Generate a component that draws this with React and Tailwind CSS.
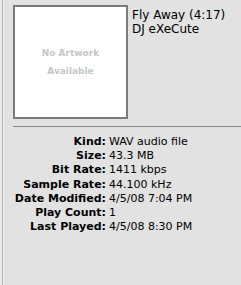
const info = [
  ["Kind:", "WAV audio file"],
  ["Size:", "43.3 MB"],
  ["Bit Rate:", "1411 kbps"],
  ["Sample Rate:", "44.100 kHz"],
  ["Date Modified:", "4/5/08 7:04 PM"],
  ["Play Count:", "1"],
  ["Last Played:", "4/5/08 8:30 PM"],
];

export default function App() {
  return (
    <div
      className="flex w-[241px] h-[285px] bg-[#e2e2e2] text-black overflow-hidden"
      style={{ fontFamily: '"DejaVu Sans", "Liberation Sans", sans-serif' }}
    >
      {/* window edge */}
      <div className="w-[2px] h-full bg-[#e9e9e9]" />
      <div className="w-px h-full bg-[#b5b5b5]" />
      <div className="w-px h-full bg-[#f2f2f2]" />

      <div className="flex-1 flex flex-col">
        {/* Header: artwork + title */}
        <div className="flex pl-[9px] pt-[5px]">
          <div className="w-[115px] h-[114px] border-2 border-[#7a7a7a] bg-white flex flex-col items-center justify-center text-[9px] font-bold text-[#c6c6c6] leading-[18px]">
            <span>No Artwork</span>
            <span>Available</span>
          </div>
          <div className="pl-[4px] pt-[3px] text-[12px] leading-[14px]">
            <p>Fly Away (4:17)</p>
            <p>DJ eXeCute</p>
          </div>
        </div>

        {/* divider */}
        <div className="ml-[9px] mt-[7px] h-px bg-[#8a8a8a]" />

        {/* Info */}
        <div className="grid grid-cols-[102px_1fr] gap-x-[3px] pt-[8px] text-[11px] leading-[14.2px]">
          {info.map(([label, value]) => (
            <div key={label} className="contents">
              <span className="font-bold text-right whitespace-nowrap">{label}</span>
              <span className="whitespace-nowrap">{value}</span>
            </div>
          ))}
        </div>
      </div>
    </div>
  );
}
